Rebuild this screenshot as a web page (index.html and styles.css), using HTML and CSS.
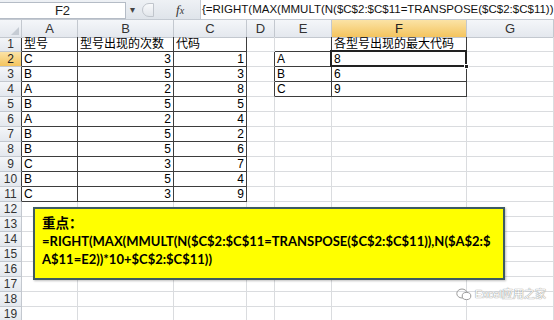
FILE: index.html
```html
<!DOCTYPE html>
<html>
<head>
    <meta charset="utf-8" />
    <title>型号出现的最大代码</title>
    <link rel="stylesheet" href="styles.css">
</head>
<body>
    <!-- formula bar -->
    <div class="bar">
        <div class="namebox">F2</div>
        <div class="drop">&#9662;</div>
        <div class="knob"></div>
        <div class="fx">f<span>x</span></div>
        <div class="formula">{=RIGHT(MAX(MMULT(N($C$2:$C$11=TRANSPOSE($C$2:$C$11)),N($A$2:$A$11=E2))*10+$C$2:$C$11))}</div>
    </div>

    <!-- sheet -->
    <div class="sheet">
        <div class="row head">
            <div class="corner"></div>
            <div class="ch">A</div>
            <div class="ch">B</div>
            <div class="ch">C</div>
            <div class="ch">D</div>
            <div class="ch">E</div>
            <div class="ch sel">F</div>
            <div class="ch">G</div>
        </div>
        <div class="row">
            <div class="rh dr">1</div>
            <div class="c dr db">型号</div>
            <div class="c dr db">型号出现的次数</div>
            <div class="c dr db">代码</div>
            <div class="c"></div>
            <div class="c dr db"></div>
            <div class="c dr db">各型号出现的最大代码</div>
            <div class="c"></div>
        </div>
        <div class="row">
            <div class="rh dr sel">2</div>
            <div class="c dr db">C</div>
            <div class="c dr db n">3</div>
            <div class="c dr db n">1</div>
            <div class="c dr"></div>
            <div class="c dr db">A</div>
            <div class="c dr db active">8<span class="handle"></span></div>
            <div class="c"></div>
        </div>
        <div class="row">
            <div class="rh dr">3</div>
            <div class="c dr db">B</div>
            <div class="c dr db n">5</div>
            <div class="c dr db n">3</div>
            <div class="c dr"></div>
            <div class="c dr db">B</div>
            <div class="c dr db">6</div>
            <div class="c"></div>
        </div>
        <div class="row">
            <div class="rh dr">4</div>
            <div class="c dr db">A</div>
            <div class="c dr db n">2</div>
            <div class="c dr db n">8</div>
            <div class="c dr"></div>
            <div class="c dr db">C</div>
            <div class="c dr db">9</div>
            <div class="c"></div>
        </div>
        <div class="row">
            <div class="rh dr">5</div>
            <div class="c dr db">B</div>
            <div class="c dr db n">5</div>
            <div class="c dr db n">5</div>
            <div class="c"></div><div class="c"></div><div class="c"></div><div class="c"></div>
        </div>
        <div class="row">
            <div class="rh dr">6</div>
            <div class="c dr db">A</div>
            <div class="c dr db n">2</div>
            <div class="c dr db n">4</div>
            <div class="c"></div><div class="c"></div><div class="c"></div><div class="c"></div>
        </div>
        <div class="row">
            <div class="rh dr">7</div>
            <div class="c dr db">B</div>
            <div class="c dr db n">5</div>
            <div class="c dr db n">2</div>
            <div class="c"></div><div class="c"></div><div class="c"></div><div class="c"></div>
        </div>
        <div class="row">
            <div class="rh dr">8</div>
            <div class="c dr db">B</div>
            <div class="c dr db n">5</div>
            <div class="c dr db n">6</div>
            <div class="c"></div><div class="c"></div><div class="c"></div><div class="c"></div>
        </div>
        <div class="row">
            <div class="rh dr">9</div>
            <div class="c dr db">C</div>
            <div class="c dr db n">3</div>
            <div class="c dr db n">7</div>
            <div class="c"></div><div class="c"></div><div class="c"></div><div class="c"></div>
        </div>
        <div class="row">
            <div class="rh dr">10</div>
            <div class="c dr db">B</div>
            <div class="c dr db n">5</div>
            <div class="c dr db n">4</div>
            <div class="c"></div><div class="c"></div><div class="c"></div><div class="c"></div>
        </div>
        <div class="row">
            <div class="rh dr">11</div>
            <div class="c dr db">C</div>
            <div class="c dr db n">3</div>
            <div class="c dr db n">9</div>
            <div class="c"></div><div class="c"></div><div class="c"></div><div class="c"></div>
        </div>
        <div class="row">
            <div class="rh">12</div>
            <div class="c"></div><div class="c"></div><div class="c"></div><div class="c"></div><div class="c"></div><div class="c"></div><div class="c"></div>
        </div>
        <div class="row">
            <div class="rh">13</div>
            <div class="c"></div><div class="c"></div><div class="c"></div><div class="c"></div><div class="c"></div><div class="c"></div><div class="c"></div>
        </div>
        <div class="row">
            <div class="rh">14</div>
            <div class="c"></div><div class="c"></div><div class="c"></div><div class="c"></div><div class="c"></div><div class="c"></div><div class="c"></div>
        </div>
        <div class="row">
            <div class="rh">15</div>
            <div class="c"></div><div class="c"></div><div class="c"></div><div class="c"></div><div class="c"></div><div class="c"></div><div class="c"></div>
        </div>
        <div class="row">
            <div class="rh">16</div>
            <div class="c"></div><div class="c"></div><div class="c"></div><div class="c"></div><div class="c"></div><div class="c"></div><div class="c"></div>
        </div>
        <div class="row">
            <div class="rh">17</div>
            <div class="c"></div><div class="c"></div><div class="c"></div><div class="c"></div><div class="c"></div><div class="c"></div><div class="c"></div>
        </div>
        <div class="row">
            <div class="rh">18</div>
            <div class="c"></div><div class="c"></div><div class="c"></div><div class="c"></div><div class="c"></div><div class="c"></div><div class="c"></div>
        </div>
        <div class="row">
            <div class="rh">19</div>
            <div class="c"></div><div class="c"></div><div class="c"></div><div class="c"></div><div class="c"></div><div class="c"></div><div class="c"></div>
        </div>

        <!-- floating text box -->
        <div class="note">
            <div class="note-title">重点：</div>
            <div>=RIGHT(MAX(MMULT(N($C$2:$C$11=TRANSPOSE($C$2:$C$11)),N($A$2:$</div>
            <div>A$11=E2))*10+$C$2:$C$11))</div>
        </div>

        <!-- watermark -->
        <div class="mark">
            <svg width="16" height="13" viewBox="0 0 16 13">
                <ellipse cx="6" cy="5.5" rx="5.2" ry="4.5" fill="none" stroke="#9a9a9a" stroke-width="1"/>
                <ellipse cx="10.5" cy="8" rx="4.3" ry="3.6" fill="#fff" stroke="#9a9a9a" stroke-width="1"/>
            </svg>
            <span>Excel应用之家</span>
        </div>
    </div>
</body>
</html>
```

FILE: styles.css
```css
* {
    box-sizing: border-box;
    margin: 0;
    padding: 0;
}

body {
    width: 554px;
    height: 320px;
    overflow: hidden;
    background: #ffffff;
    font-family: "Liberation Sans", "Noto Sans CJK SC", sans-serif;
    font-size: 12px;
    color: #000;
}

/* formula bar */
.bar {
    display: flex;
    align-items: center;
    height: 20px;
    background: linear-gradient(#eef1f5, #dfe4ea);
    border-bottom: 1px solid #c4cad2;
}

.namebox {
    width: 126px;
    height: 17px;
    margin-top: 1px;
    background: #fff;
    border: 1px solid #b5bcc6;
    border-left: none;
    text-align: center;
    font-size: 13px;
    line-height: 15px;
    color: #222;
}

.drop {
    width: 12px;
    font-size: 10px;
    color: #444;
    text-align: center;
}

.knob {
    width: 12px;
    height: 14px;
    margin-left: 4px;
    border: 1px solid #c0c5cc;
    border-radius: 7px 0 0 7px;
    background: linear-gradient(#f8f9fb, #e2e6eb);
}

.fx {
    width: 24px;
    margin-left: 22px;
    font-family: "Liberation Serif", serif;
    font-style: italic;
    font-size: 13px;
    color: #333;
}

.fx span {
    font-size: 10px;
}

.formula {
    flex: 1;
    height: 19px;
    padding-left: 1px;
    background: #fff;
    border-left: 1px solid #c4cad2;
    font-size: 11.5px;
    line-height: 18px;
    white-space: nowrap;
    overflow: hidden;
    color: #111;
}

/* sheet */
.sheet {
    position: relative;
}

.row {
    display: grid;
    grid-template-columns: 22px 56px 96px 73px 28px 57px 135px 1fr;
    height: 15px;
}

.head {
    height: 17px;
}

.corner,
.ch,
.rh {
    background: linear-gradient(#f4f6f9, #e4e8ee);
    border-right: 1px solid #c3c8cf;
    border-bottom: 1px solid #c3c8cf;
    color: #333;
    text-align: center;
}

.corner {
    position: relative;
}

.corner::after {
    content: "";
    position: absolute;
    right: 2px;
    bottom: 2px;
    border-left: 8px solid transparent;
    border-bottom: 8px solid #c6ccd4;
}

.ch {
    font-size: 13px;
    line-height: 17px;
}

.rh {
    font-size: 12px;
    line-height: 14px;
}

.ch.sel,
.rh.sel {
    background: linear-gradient(#fbe3a6, #f4c45e);
    color: #222;
}

.c {
    border-right: 1px solid #dadcdf;
    border-bottom: 1px solid #dadcdf;
    padding: 0 2px;
    line-height: 14px;
    white-space: nowrap;
    overflow: hidden;
}

.n {
    text-align: right;
}

.c.dr,
.rh.dr {
    border-right-color: #3d3d3d;
}

.c.db {
    border-bottom-color: #3d3d3d;
}

.active {
    position: relative;
    overflow: visible;
}

.active::after {
    content: "";
    position: absolute;
    left: -2px;
    top: -2px;
    right: -1px;
    bottom: -1px;
    border: 2px solid #222;
}

.handle {
    position: absolute;
    right: -3px;
    bottom: -3px;
    width: 5px;
    height: 5px;
    background: #222;
    border: 1px solid #fff;
    z-index: 1;
}

/* text box over the sheet */
.note {
    position: absolute;
    left: 33px;
    top: 187px;
    width: 472px;
    height: 73px;
    padding: 5px 7px;
    background: #ffff00;
    border: 2px solid #3e5b60;
    box-shadow: 1px 1px 2px rgba(0, 0, 0, 0.25);
    font-family: Lato, "Noto Sans CJK SC", sans-serif;
    font-weight: 700;
    font-size: 13px;
    line-height: 18px;
    white-space: nowrap;
}

.note-title {
    font-size: 13.5px;
}

.mark {
    position: absolute;
    left: 456px;
    top: 267px;
    display: flex;
    align-items: center;
    gap: 3px;
    font-size: 11px;
    line-height: 14px;
    color: #fff;
    text-shadow: 0 0 1px #8a8a8a, 0 0 1px #8a8a8a;
}
```
